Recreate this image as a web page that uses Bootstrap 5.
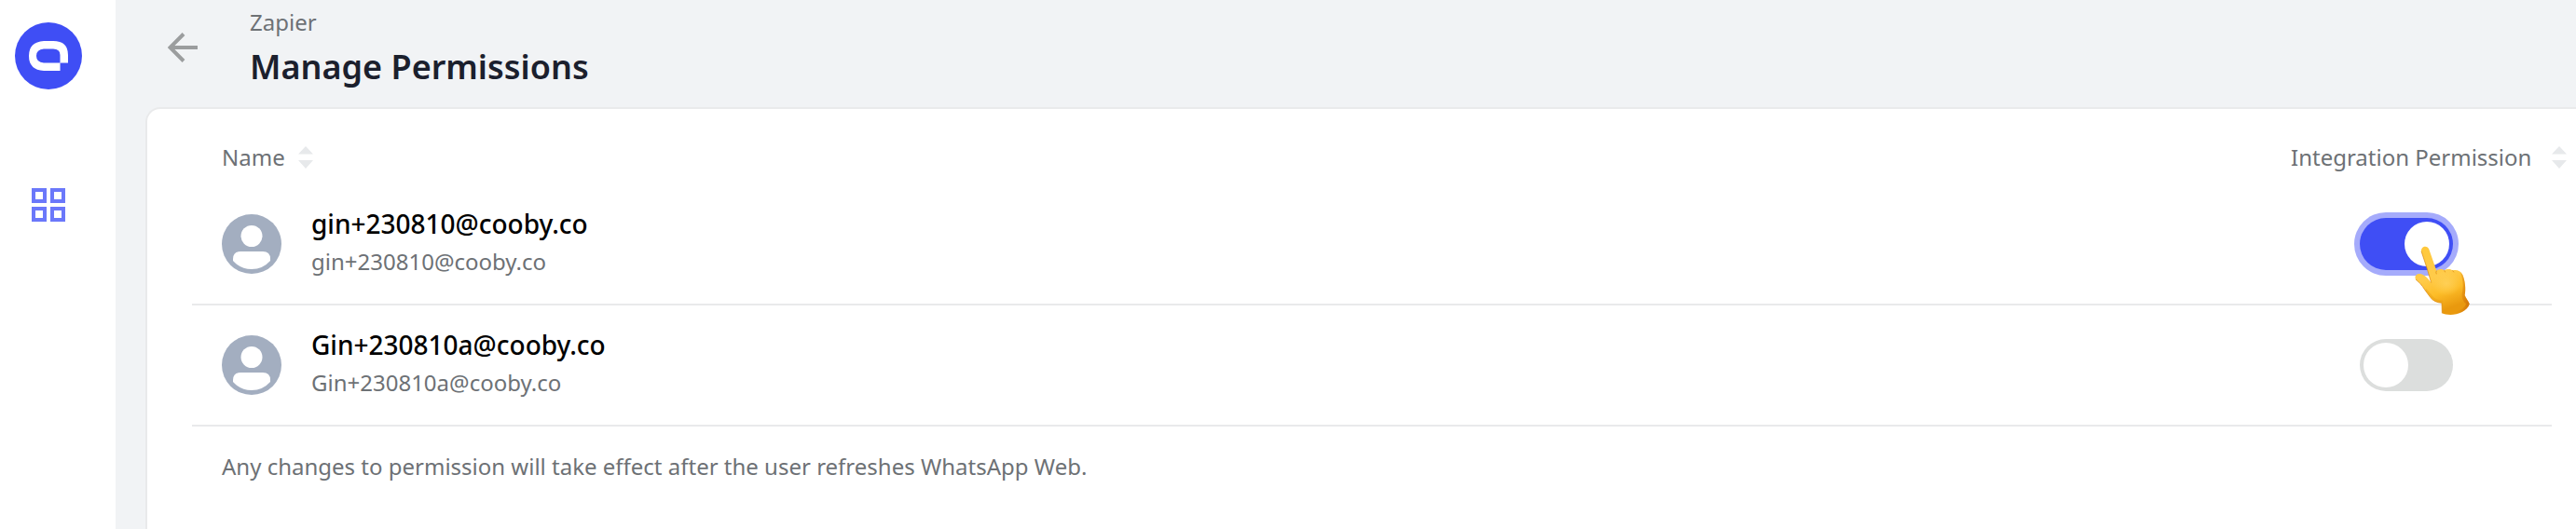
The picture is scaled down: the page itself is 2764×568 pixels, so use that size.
<!DOCTYPE html>
<html lang="en">
<head>
<meta charset="utf-8">
<meta name="viewport" content="width=device-width, initial-scale=1">
<title>Manage Permissions</title>
<link href="https://cdn.jsdelivr.net/npm/bootstrap@5.3.0/dist/css/bootstrap.min.css" rel="stylesheet">
<style>
  :root { --brand: #3f4ef5; --brand-soft: #6b78fa; --muted: #6d7175; --line: #e9eaeb; }
  body { font-family: "Noto Sans", sans-serif; font-size: 24px; line-height: 36px; color: #000; background: #f1f3f5; overflow-x: hidden; }
  .side-rail { width: 124px; padding: 24px 20px 0 0; gap: 106px; }
  .side-rail a, .back-link { line-height: 0; }
  .side-rail a + a { padding-right: 0; }
  .page-head { padding: 6px 56px 0; height: 115px; }
  .back-link { margin-top: 25px; }
  .page-title { font-size: 36px; line-height: 48px; font-weight: 600; color: #1b202d; margin: 6px 0 0; }
  .soft-text { color: var(--muted); }
  .panel { margin-left: 32px; padding: 34px 26px 0 48px; border: 2px solid var(--line); border-width: 2px 0 0 2px; border-radius: 16px 0 0 0; }
  .user-table { width: 100%; table-layout: fixed; border-collapse: separate; border-spacing: 0; }
  .user-table th { height: 46px; padding: 0 32px; font-weight: 400; vertical-align: top; white-space: nowrap; line-height: 36px; }
  .user-table td { height: 130px; padding: 0 32px; border-bottom: 2px solid var(--line); vertical-align: middle; }
  .user-table tbody tr:first-child td { height: 131px; padding-top: 1px; }
  .toggle-col { width: 312px; }
  .sort-btn { border: 0; padding: 0; background: none; color: var(--muted); display: flex; align-items: center; gap: 14px; }
  .toggle-col .sort-btn { width: 296px; justify-content: space-between; }
  .user-text { padding-bottom: 4px; }
  .user-name { font-size: 28px; line-height: 38px; font-weight: 500; margin-bottom: 4px; }
  .toggle-box { width: 100px; height: 56px; }
  .form-check-input.toggle { width: 100px; height: 56px; margin: 0; border: 0; border-radius: 28px; background: #dcdedd; display: block; }
  .toggle::before { content: ""; display: block; width: 48px; height: 48px; border-radius: 50%; background: #fff; }
  .form-check-input.toggle { padding: 4px; }
  .form-check-input.toggle:checked { background: var(--brand); box-shadow: 0 0 0 6px #a5abfb; }
  .toggle:checked::before { margin-left: 44px; }
  .hand { left: 58px; top: 29px; pointer-events: none; }
  .note { padding: 25px 32px 40px; }
</style>
</head>
<body>
<div class="d-flex min-vh-100">
  <nav class="side-rail bg-white d-flex flex-column align-items-center flex-shrink-0" aria-label="Main">
    <a href="#" aria-label="Home">
      <svg width="72" height="72" viewBox="0 0 72 72">
        <circle cx="36" cy="36" r="36" fill="#3f4ef5"/>
        <path fill="#fff" fill-rule="evenodd" d="M31 20H41Q57 20 57 35V43.500H49V52H31Q15 51 15 36Q15 21 31 20ZM31 28.500Q23 29 23 36Q23 43 31 43.500H48.500V35Q48.500 28.500 41 28.500Z"/>
        <path d="M48.500 43.500V52M48.500 43.500H57" stroke="#a5abfb" stroke-width="1"/>
      </svg>
    </a>
    <a href="#" aria-label="Apps">
      <svg width="36" height="36" viewBox="2 2 36 36" fill="none" stroke="#6b78fa" stroke-width="4">
        <path d="M4 4h12v12H4zM24 4h12v12H24zM4 24h12v12H4zM24 24h12v12H24z"/>
      </svg>
    </a>
  </nav>
  <main class="flex-grow-1 d-flex flex-column">
    <header class="page-head d-flex align-items-start gap-5">
      <a class="back-link" href="#" aria-label="Back">
        <svg width="40" height="40" viewBox="0 0 40 40" fill="none" stroke="#9b9d9e" stroke-width="4"><path d="M32 20H4M17 5.500L2.500 20L17 34.500"/></svg>
      </a>
      <div>
        <div class="soft-text">Zapier</div>
        <h1 class="page-title">Manage Permissions</h1>
      </div>
    </header>
    <section class="panel bg-white flex-grow-1">
      <table class="user-table">
        <thead>
          <tr>
            <th scope="col"><button class="sort-btn" type="button">Name <svg width="16" height="24" viewBox="0 0 16 24" fill="#e7e9eb"><path d="M8 0L16 8.500H0zM0 15H16L8 24z"/></svg></button></th>
            <th scope="col" class="toggle-col"><button class="sort-btn" type="button">Integration Permission <svg width="16" height="24" viewBox="0 0 16 24" fill="#e7e9eb"><path d="M8 0L16 8.500H0zM0 15H16L8 24z"/></svg></button></th>
          </tr>
        </thead>
        <tbody>
          <tr>
            <td>
              <div class="d-flex align-items-center">
                <svg class="flex-shrink-0 me-4" width="72" height="64" viewBox="0 0 72 64"><circle cx="32" cy="32" r="32" fill="#a3aec0"/><circle cx="32" cy="23.500" r="11.500" fill="#fff"/><path fill="#fff" d="M20 40H44Q52 40 52 48V50Q44 59 32 59Q20 59 12 50V48Q12 40 20 40Z"/></svg>
                <div class="user-text">
                  <label class="user-name d-block" for="perm-1">gin+230810@cooby.co</label>
                  <div class="soft-text">gin+230810@cooby.co</div>
                </div>
              </div>
            </td>
            <td>
              <div class="toggle-box position-relative mx-auto">
                <input class="form-check-input toggle" type="checkbox" role="switch" id="perm-1" checked>
                <svg class="hand position-absolute" width="60" height="77" viewBox="270 160 180 231" aria-hidden="true">
                  <defs>
                    <linearGradient id="skin" x1="0" y1="0" x2="0.3" y2="1">
                      <stop offset="0" stop-color="#ffc83a"/><stop offset=".5" stop-color="#ffcb4a"/><stop offset=".75" stop-color="#fdbd28"/><stop offset="1" stop-color="#e9990e"/>
                    </linearGradient>
                    <linearGradient id="edge" x1="0" y1="0" x2="1" y2="0">
                      <stop offset=".5" stop-color="#d97a09" stop-opacity="0"/><stop offset="1" stop-color="#c96806" stop-opacity=".75"/>
                    </linearGradient>
                    <radialGradient id="glow"><stop offset="0" stop-color="#ffd563" stop-opacity=".7"/><stop offset="1" stop-color="#ffd563" stop-opacity="0"/></radialGradient>
                  </defs>
                  <path fill="url(#skin)" d="M294 180C293 163 314 160 319 174L343 243C351 237 362 237 368 242C376 237 387 236 394 242C408 239 421 243 427 256C435 274 438 303 434 322C437 332 445 338 449 350C443 373 412 385 388 385Q370 385 361 380L360 347Q336 345 324 330L305 304C296 289 286 279 276 271C270 259 282 250 294 254C309 259 318 272 326 282L313 237Z"/>
                  <ellipse cx="375" cy="284" rx="48" ry="40" fill="url(#glow)"/>
                  <path fill="url(#edge)" d="M427 256C435 274 438 303 434 322C437 332 445 338 449 350C443 373 412 385 388 385Q370 385 361 380C395 380 430 374 438 350C427 340 421 326 427 306Q431 282 420 247Z"/>
                  <path fill="none" stroke="#d78005" stroke-width="3" stroke-opacity=".65" d="M276 271C286 279 296 289 305 304L324 330Q336 345 360 347L361 380M294 180L313 237L326 282M343 243Q340 249 343 254M368 242L371 248M394 242L399 248"/>
                  <path fill="none" stroke="#e79b16" stroke-width="6" stroke-opacity=".4" d="M308 304L328 327Q339 341 363 342"/>
                </svg>
              </div>
            </td>
          </tr>
          <tr>
            <td>
              <div class="d-flex align-items-center">
                <svg class="flex-shrink-0 me-4" width="72" height="64" viewBox="0 0 72 64"><circle cx="32" cy="32" r="32" fill="#a3aec0"/><circle cx="32" cy="23.500" r="11.500" fill="#fff"/><path fill="#fff" d="M20 40H44Q52 40 52 48V50Q44 59 32 59Q20 59 12 50V48Q12 40 20 40Z"/></svg>
                <div class="user-text">
                  <label class="user-name d-block" for="perm-2">Gin+230810a@cooby.co</label>
                  <div class="soft-text">Gin+230810a@cooby.co</div>
                </div>
              </div>
            </td>
            <td>
              <div class="toggle-box mx-auto">
                <input class="form-check-input toggle" type="checkbox" role="switch" id="perm-2">
              </div>
            </td>
          </tr>
        </tbody>
      </table>
      <p class="note soft-text m-0">Any changes to permission will take effect after the user refreshes WhatsApp Web.</p>
    </section>
  </main>
</div>
<script src="https://cdn.jsdelivr.net/npm/bootstrap@5.3.0/dist/js/bootstrap.bundle.min.js"></script>
</body>
</html>
